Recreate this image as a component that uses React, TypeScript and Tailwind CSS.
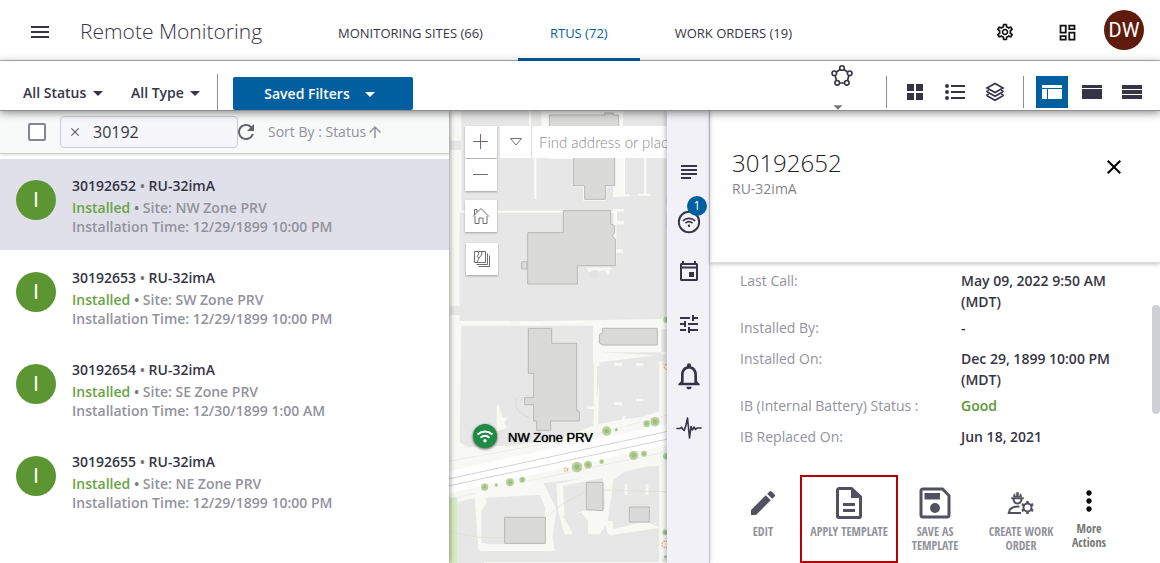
import { useState } from 'react';
import type { ReactNode } from 'react';
import clsx from 'clsx';
import {
  MdArrowDropDown,
  MdArrowUpward,
  MdClose,
  MdEdit,
  MdMenu,
  MdMoreVert,
  MdNotificationsNone,
  MdOutlineDashboard,
  MdOutlineSettings,
  MdRefresh,
  MdSubject,
  MdTune,
} from 'react-icons/md';

const TABS = ['MONITORING SITES (66)', 'RTUS (72)', 'WORK ORDERS (19)'];

const RTUS = [
  { id: '30192652', site: 'NW Zone PRV', installed: '12/29/1899 10:00 PM' },
  { id: '30192653', site: 'SW Zone PRV', installed: '12/29/1899 10:00 PM' },
  { id: '30192654', site: 'SE Zone PRV', installed: '12/30/1899 1:00 AM' },
  { id: '30192655', site: 'NE Zone PRV', installed: '12/29/1899 10:00 PM' },
];

const DETAILS = [
  { label: 'Last Call:', value: 'May 09, 2022 9:50 AM', zone: '(MDT)' },
  { label: 'Installed By:', value: '-' },
  { label: 'Installed On:', value: 'Dec 29, 1899 10:00 PM', zone: '(MDT)' },
  { label: 'IB (Internal Battery) Status :', value: 'Good', good: true },
  { label: 'IB Replaced On:', value: 'Jun 18, 2021' },
];

/* ---------- icons ---------- */

const PolygonIcon = () => (
  <svg width="24" height="24" viewBox="0 0 24 24" fill="none" stroke="currentColor" strokeWidth="1.6">
    <path d="M10 5.5 6.5 8M14 5.5 17.5 8M5.2 11.5l1.2 5M18.8 11.5l-1.2 5M9.5 19h5" />
    <circle cx="12" cy="4" r="2.3" />
    <circle cx="4.3" cy="9.3" r="2.3" />
    <circle cx="19.7" cy="9.3" r="2.3" />
    <circle cx="7.2" cy="18.8" r="2.3" />
    <circle cx="16.8" cy="18.8" r="2.3" />
  </svg>
);

const GridIcon = () => (
  <svg width="16" height="16" viewBox="0 0 16 16" fill="currentColor">
    <path d="M0 0h7v7H0zM9 0h7v7H9zM0 9h7v7H0zM9 9h7v7H9z" />
  </svg>
);

const ListIcon = () => (
  <svg width="20" height="16" viewBox="0 0 20 16" fill="currentColor">
    <circle cx="2" cy="2" r="2" />
    <circle cx="2" cy="8" r="2" />
    <circle cx="2" cy="14" r="2" />
    <path d="M6 1h14v2H6zM6 7h14v2H6zM6 13h14v2H6z" />
  </svg>
);

const LayersIcon = () => (
  <svg width="20" height="20" viewBox="0 0 20 20" fill="none" stroke="currentColor" strokeWidth="1.7">
    <path d="M10 1.5 18 6l-8 4.5L2 6z" />
    <path d="m2 9.8 8 4.5 8-4.5" />
    <path d="m2 13.7 8 4.5 8-4.5" />
    <path d="m1 9.5 3-1.5M19 9.5 16 8M1 13.4l3-1.5M19 13.4l-3-1.5" strokeWidth="1.2" />
  </svg>
);

const SplitViewIcon = () => (
  <svg width="20" height="14" viewBox="0 0 20 14" fill="currentColor">
    <path d="M0 0h20v3H0zM0 4h5v10H0zM6 4h14v10H6z" />
  </svg>
);

const PanelViewIcon = () => (
  <svg width="20" height="14" viewBox="0 0 20 14" fill="currentColor">
    <path d="M0 0h20v3H0zM0 4h20v10H0z" />
  </svg>
);

const RowsViewIcon = () => (
  <svg width="20" height="14" viewBox="0 0 20 14" fill="currentColor">
    <path d="M0 0h20v4H0zM0 5h20v4H0zM0 10h20v4H0z" />
  </svg>
);

const WifiCircleIcon = () => (
  <svg width="24" height="24" viewBox="0 0 24 24" fill="none" stroke="currentColor">
    <circle cx="12" cy="12" r="10.2" strokeWidth="1.9" />
    <path d="M5.8 10.8c3.6-3.2 8.8-3.2 12.4 0M8.4 13.2c2.2-1.9 5-1.9 7.2 0" strokeWidth="1.6" />
    <circle cx="12" cy="15.7" r="1.2" fill="currentColor" stroke="none" />
  </svg>
);

const EventIcon = () => (
  <svg width="22" height="22" viewBox="0 0 22 22" fill="currentColor">
    <path d="M4 0h2v2h10V0h2v2h.5C19.4 2 20 2.7 20 3.5v15c0 .9-.7 1.5-1.5 1.5h-15C2.6 20 2 19.4 2 18.5v-15C2 2.6 2.6 2 3.5 2H4zM4 4v1.5h14V4zM4 7.5V18h14V7.5zM11 11h5v5h-5z" />
  </svg>
);

const PulseIcon = () => (
  <svg width="26" height="22" viewBox="0 0 26 22" fill="none" stroke="currentColor" strokeWidth="1.6" strokeLinejoin="round" strokeLinecap="round">
    <path d="M1 11.5h3l1.5-1.2L7 12.5l1.2 1L10 8l1.5-7 2 20L15 9.5l1.5 3.5 1.5-3 1.5 2.5 1.5-1.5H25" />
  </svg>
);

const TemplateIcon = () => (
  <svg width="26" height="32" viewBox="0 0 26 32">
    <path d="M3 1.5h12.5l9 8.500V29a1.5 1.5 0 0 1-1.5 1.5H3A1.5 1.5 0 0 1 1.5 29V3A1.5 1.5 0 0 1 3 1.5z" fill="none" stroke="currentColor" strokeWidth="3" />
    <path d="M15 1.5V11h9zM7 16h12v3H7zM7 22h12v3H7z" fill="currentColor" />
  </svg>
);

const SaveIcon = () => (
  <svg width="32" height="32" viewBox="0 0 32 32">
    <path d="M4 2h19.5L30 8.5V28a2 2 0 0 1-2 2H4a2 2 0 0 1-2-2V4a2 2 0 0 1 2-2z" fill="none" stroke="currentColor" strokeWidth="3" />
    <path d="M5.5 6H21v6.5H5.5z" fill="currentColor" />
    <circle cx="16" cy="21" r="5" fill="currentColor" />
  </svg>
);

const WorkerIcon = () => (
  <svg width="28" height="24" viewBox="0 0 28 24" fill="none" stroke="currentColor" strokeWidth="2">
    <path d="M6.5 7c0 4 1.5 5.5 4 5.5s4-1.5 4-5.500" />
    <path d="M4.500 6.500h12V8h-12zM6.500 6V4l1.500-1.500V5h1.500V1.500h2V5H13V2.500L14.500 4v2z" fill="currentColor" strokeWidth="0.5" />
    <path d="M12.500 15.500c-4.500 0-8 1-9.700 3.200L1.800 22H14" />
    <circle cx="20.5" cy="16.5" r="4" />
    <path d="M20.5 10v3M20.5 20v3M14.900 13.200l2.500 1.400M23.600 18.400l2.500 1.400M14.900 19.800l2.500-1.400M23.600 14.600l2.500-1.400" strokeWidth="2.5" />
  </svg>
);

const HomeIcon = () => (
  <svg width="18" height="18" viewBox="0 0 18 18" fill="none" stroke="currentColor">
    <path d="m1 9.5 8-8 8 8M2.5 8V2.5H5V5M3 9v7.5h4V11h4v5.5h4V9" />
  </svg>
);

const BasemapIcon = () => (
  <svg width="18" height="18" viewBox="0 0 18 18" fill="none" stroke="currentColor">
    <path d="M1.5 1.5h11v11h-11zM3.5 14.5h11v-11M5.5 16.5h11v-11M5 1.5 6 4 4 6.5 6 8 4 12.5M9 1.5 8.5 5 6 8" />
  </svg>
);

/* ---------- header ---------- */

const Header = () => {
  const [tab, setTab] = useState(1);

  return (
    <header className="flex h-[61px] shrink-0 border-b border-[#b5b5b9]">
      <div className="flex w-[306px] shrink-0 items-center gap-7 pl-7">
        <button aria-label="Menu" className="pt-1">
          <MdMenu size={24} />
        </button>
        <h1 className="pt-1 text-[21px] font-light whitespace-nowrap">Remote Monitoring</h1>
      </div>
      <nav className="flex gap-[3px]">
        {TABS.map((name, i) => (
          <button
            key={name}
            onClick={() => setTab(i)}
            className={clsx(
              '-mb-px border-b-3 px-8 pt-[10px] text-[13px] font-medium whitespace-nowrap',
              i === tab ? 'border-[#005f9e] text-[#005f9e]' : 'border-transparent',
            )}
          >
            {name}
          </button>
        ))}
      </nav>
      <div className="ml-auto flex items-center pr-4 text-[#111]">
        <button aria-label="Settings" className="mr-[42px] pt-1">
          <MdOutlineSettings size={20} />
        </button>
        <button aria-label="Dashboard" className="mr-[26px] pt-1">
          <MdOutlineDashboard size={21} />
        </button>
        <button className="size-10 rounded-full bg-[#5f1b0b] font-[Roboto] text-xl text-white">DW</button>
      </div>
    </header>
  );
};

const FilterSelect = ({ name }: { name: string }) => (
  <label className="relative flex items-center">
    <select aria-label={name} className="appearance-none bg-transparent pr-4 text-sm font-semibold">
      <option>{name}</option>
    </select>
    <MdArrowDropDown size={24} className="pointer-events-none absolute -right-[7px]" />
  </label>
);

const ToolButton = ({ label, active, children }: { label: string; active?: boolean; children: ReactNode }) => (
  <button
    aria-label={label}
    className={clsx('flex size-8 items-center justify-center', active && 'bg-[#005f9e] text-white')}
  >
    {children}
  </button>
);

const Toolbar = () => (
  <div className="relative z-20 flex h-[50px] shrink-0 items-end border-b border-[#8d8d90] bg-white shadow-[0_2px_8px_rgba(0,0,0,0.45)]">
    <div className="flex h-9 items-center gap-7 border-r border-[#8d8d99] pt-[2px] pr-[17px] pl-[23px]">
      <FilterSelect name="All Status" />
      <FilterSelect name="All Type" />
    </div>
    <button className="ml-[15px] flex h-[33px] w-[180px] items-center justify-center gap-2 rounded-xs bg-[#005f9e] text-sm font-semibold text-white">
      Saved Filters
      <MdArrowDropDown size={24} />
    </button>
    <div className="ml-auto flex items-center self-stretch pr-3">
      <button aria-label="Draw area" className="mr-7 flex h-full w-8 flex-col items-center justify-between overflow-hidden pt-[3px]">
        <PolygonIcon />
        <MdArrowDropDown size={22} className="mr-2 -mb-2 shrink-0 text-[#777]" />
      </button>
      <div className="flex items-center gap-2 pt-3">
        <span className="mr-1 h-8 w-px bg-[#8d8d99]" />
        <ToolButton label="Cards"><GridIcon /></ToolButton>
        <ToolButton label="List"><ListIcon /></ToolButton>
        <ToolButton label="Layers"><LayersIcon /></ToolButton>
        <span className="mx-1 h-8 w-px bg-[#8d8d99]" />
        <ToolButton label="Split view" active><SplitViewIcon /></ToolButton>
        <ToolButton label="Panel view"><PanelViewIcon /></ToolButton>
        <ToolButton label="Rows view"><RowsViewIcon /></ToolButton>
      </div>
    </div>
  </div>
);

/* ---------- list ---------- */

const RtuList = () => {
  const [query, setQuery] = useState('30192');
  const [selected, setSelected] = useState('30192652');

  return (
    <section className="z-10 flex w-[449px] shrink-0 flex-col bg-white shadow-[1px_0_5px_rgba(0,0,0,0.4)]">
      <div className="flex h-[43px] shrink-0 items-center border-b border-[#cfd2d2] bg-[#f8faf9] pl-7 shadow-sm">
        <input
          type="checkbox"
          aria-label="Select all"
          className="size-[18px] appearance-none rounded-xs border-2 border-[#85858f] bg-white checked:bg-[#005f9e]"
        />
        <div className="ml-[14px] flex h-8 w-[178px] items-center rounded-sm border border-[#ccccd4] bg-[#f7f7fb]">
          <button aria-label="Clear" onClick={() => setQuery('')} className="px-[7px] text-[#5c5c68]">
            <MdClose size={14} />
          </button>
          <input
            aria-label="Search"
            value={query}
            onChange={e => setQuery(e.target.value)}
            className="min-w-0 flex-1 bg-transparent pl-1 text-base outline-none"
          />
        </div>
        <button aria-label="Refresh" className="-ml-1 text-[#62626c]">
          <MdRefresh size={24} />
        </button>
        <button className="ml-[10px] flex items-center text-sm text-[#92929c]">
          Sort By : Status
          <MdArrowUpward size={18} />
        </button>
      </div>
      <ul className="pt-[5px]">
        {RTUS.map(rtu => (
          <li key={rtu.id}>
            <button
              onClick={() => setSelected(rtu.id)}
              className={clsx(
                'mb-px flex h-[91px] w-full gap-4 px-4 pt-[17px] text-left text-sm font-semibold text-[#92929c]',
                selected === rtu.id && 'bg-[#e0e0ea]',
              )}
            >
              <span className="mt-1 flex size-10 shrink-0 items-center justify-center rounded-full bg-[#5c9632] font-[Roboto] text-xl font-normal text-white">
                I
              </span>
              <span className="leading-[19px]">
                <span className="mb-[3px] block text-[#363545]">
                  {rtu.id} <span className="text-[#77777c]">•</span> RU-32imA
                </span>
                <span className="block">
                  <span className="text-[#6aa343]">Installed</span> <span className="text-[#77777c]">•</span> Site: {rtu.site}
                </span>
                <span className="block">Installation Time: {rtu.installed}</span>
              </span>
            </button>
          </li>
        ))}
      </ul>
    </section>
  );
};

/* ---------- map ---------- */

const TREES = [
  [110, 498, 11], [145, 492, 5], [186, 484, 12], [223, 476, 9], [387, 438, 16], [420, 431, 12], [461, 422, 7],
  [476, 330, 14], [505, 326, 5], [557, 403, 14], [588, 398, 9], [596, 308, 10], [621, 302, 14], [655, 406, 10],
  [652, 634, 9], [652, 708, 5], [656, -4, 10],
];

const MapDrawing = () => (
  <svg className="absolute inset-0 size-full" viewBox="3 6 654 1359" preserveAspectRatio="xMidYMin slice">
    <rect x="-600" y="0" width="1900" height="1400" fill="#f8f9f4" />
    {/* paved blocks */}
    <g fill="#e7e7e7">
      <path d="M40 6H280V55H300V150H380V235H405V275H475V235H495V265L655 255V620L640 630L35 640V310L40 300V6z" />
      <path d="M520 6H655V260H520z" />
      <path d="M6 95h34v28H6zM6 590h30v28H6zM640 255h20v30h-20zM640 315h20v40h-20z" />
      <path d="M40 650H435V740Q430 775 460 772L435 950L360 980L200 1010L60 1015L35 1000z" />
      <path d="M455 760L655 735V770H640V905L580 925L530 930L450 945z" />
      <path d="M460 730H655V660H640V740z" />
      <path d="M28 1180L85 1160L100 1310H310L325 1200L285 1120L370 1100L480 1085L495 1270L640 1240V1360H28z" />
      <path d="M495 1115L545 1075L640 1070V1240L480 1275z" />
      <path d="M6 1350H660V1365H6z" />
    </g>
    <path d="M35 308H500M35 640H186M218 641H276M308 640H398M262 130V270M246 6V60M592 140V255M528 140V255M515 258H545M570 257H608" stroke="#fbfcf8" strokeWidth="6" fill="none" />
    <path d="M500 6h25v254h-28zM497 300h30v8h-20v28h20v10h-22v75h20v10h-20v38h-10z" fill="#f9faf5" />
    <path d="M415 475h75l-10 25-8-15-50 5z" fill="#f6f7f2" />
    <ellipse cx="440" cy="496" rx="16" ry="12" fill="#e3e3e1" />
    <path d="M423 636H645V648H452V720L438 730V660z" fill="#f8f9f4" />

    <g transform="translate(0 636)">
      {/* avenue */}
      <path d="M0 445L200 390L400 350L660 285V420L500 460L260 490L0 550z" fill="#f7f8f3" />
      <path d="M0 470L660 328M0 498L660 352" stroke="#fff" strokeWidth="38" />
      <path d="M0 421L200 385L440 340L660 282M0 536L250 478L500 425L660 392" stroke="#e6e7e2" strokeWidth="2" fill="none" />
      <path d="M0 474L660 331M0 495L660 354" stroke="#bdbdb9" strokeWidth="2" />
      {/* lawns and driveways */}
      <path d="M80 525Q80 512 100 508L250 478Q285 475 295 510L320 690H95Q88 685 90 668z" fill="#f8f9f4" />
      <path d="M115 550V530L275 522L292 560V670H118L100 665V570z" fill="#e7e7e7" />
      <path d="M325 490L470 455Q500 455 490 500L480 600L600 605L640 620L490 642Q472 640 475 610L455 640H420V600L400 575L345 585L375 640H350L330 570z" fill="#f8f9f4" />
      <path d="M345 495L465 470L472 565L405 570L350 590z" fill="#e7e7e7" />
      <path d="M495 480L535 450L635 435V590L495 625z" fill="#e7e7e7" />
      <path d="M638 120V285M442 10V310M660 5H440M638 430V730" stroke="#f8f9f4" strokeWidth="9" />
      <path d="M108 727H660M150 683H310M150 253V330M498 130H522M564 130H586M498 248H522M564 237H586M534 490V522M597 490V522M418 260H440M528 285V325" stroke="#f8f9f4" strokeWidth="8" />
      <path d="M0 530h28V730H0z" fill="#d9ebc2" />
      <path d="M0 633L90 649H170M292 590L350 545L410 514M465 507L655 512" stroke="#dedecf" strokeWidth="2" fill="none" />
      <path d="M205 230q-8 30 12 45l30 18M240 222q-25 5-20 25" stroke="#dbdbd8" strokeWidth="3" fill="none" />
      <path d="M150 250l15 40 15 0-12 15 10 15-28 10z" fill="#f8f9f4" />
    </g>

    {/* buildings */}
    <g fill="#dadad9" stroke="#b8b8b7" strokeWidth="3">
      <path d="M304 18H470V12H496V18H512V80H304zM377 80V230H410V271H472V230H500V80z" />
      <path d="M346 305H488V345L500 350V372L492 380L502 390V470H388V525H239V371H346zM221 458H237V480H221z" />
      <g transform="translate(0 636)">
        <path d="M241 22H311V67H386V268L394 272V300H308V328H266V300H257V251H230V230H257V157H241z" />
        <path d="M464 22H628V72H464L454 66V40L464 36z" />
        <path d="M170 589H292V667H170zM415 484H465V569L415 566zM544 558H604V603H544z" />
      </g>
    </g>

    <g transform="translate(0 636)">
      {TREES.map(([x, y, r]) => (
        <g key={`${x}-${y}`}>
          <circle cx={x} cy={y} r={r} fill="#b9d09c" />
          <circle cx={x} cy={y} r={r / 2} fill="#9bbd80" />
        </g>
      ))}
      <g fill="none" stroke="#e8ae84" strokeWidth="4" strokeDasharray="5 3">
        <circle cx="354" cy="446" r="5" />
        <circle cx="652" cy="670" r="10" />
        <circle cx="656" cy="138" r="7" />
      </g>
    </g>
  </svg>
);

const MAP_BUTTON = 'flex size-8 items-center justify-center bg-white text-[#6e6e6e] shadow-[0_1px_2px_rgba(0,0,0,0.3)]';

const MapView = () => (
  <section className="relative min-w-0 flex-1 overflow-hidden bg-[#f8f9f4]">
    <MapDrawing />
    <div className="absolute top-[15px] left-4 flex flex-col">
      <button aria-label="Zoom in" className={MAP_BUTTON}>
        <svg width="16" height="16" viewBox="0 0 16 16" stroke="#8a5a8f">
          <path d="M7.5 0v15" />
          <path d="M0 7.5h15" stroke="#6e6e6e" />
        </svg>
      </button>
      <button aria-label="Zoom out" className={clsx(MAP_BUTTON, 'mt-px')}>
        <svg width="16" height="16" viewBox="0 0 16 16" stroke="#6e6e6e">
          <path d="M0 7.5h15" />
        </svg>
      </button>
      <button aria-label="Home" className={clsx(MAP_BUTTON, 'mt-[9px]')}><HomeIcon /></button>
      <button aria-label="Basemaps" className={clsx(MAP_BUTTON, 'mt-[11px] ml-px')}><BasemapIcon /></button>
    </div>
    <div className="absolute top-[15px] right-0 left-[51px] flex h-8 bg-white">
      <button aria-label="Search source" className="flex w-8 shrink-0 items-center justify-center border-r border-[#ddd]">
        <svg width="14" height="10" viewBox="0 0 14 10" fill="none" stroke="#6e6e6e">
          <path d="M1.5 1.5h11L7 8z" />
        </svg>
      </button>
      <input
        aria-label="Find address or place"
        placeholder="Find address or place"
        className="min-w-0 flex-1 pl-[7px] font-[Lato] text-[15px] font-light outline-none placeholder:text-[#8a8a8a]"
      />
    </div>
    <div className="absolute top-[313px] left-6 flex items-center gap-[11px]">
      <span className="flex size-6 items-center justify-center rounded-full bg-[#1f8a43] shadow-[0_1px_3px_rgba(0,0,0,0.7)]">
        <svg width="18" height="14" viewBox="0 0 18 14" fill="none" stroke="#fff" strokeWidth="2">
          <path d="M1.5 5.5c4.5-4 10.5-4 15 0M4.5 8.8c2.7-2.4 6.3-2.4 9 0" />
          <circle cx="9" cy="11.7" r="1.7" fill="#fff" stroke="none" />
        </svg>
      </span>
      <span className="pt-1 font-['Liberation_Sans'] text-[13px] whitespace-nowrap text-black [text-shadow:0_0_1px_#000]">
        NW Zone PRV
      </span>
    </div>
  </section>
);

/* ---------- detail ---------- */

const Rail = () => (
  <nav className="z-10 flex w-[43px] shrink-0 flex-col items-center border-r border-[#c6c6cc] bg-[#f2f1f8] pt-[49px] pl-[2px] shadow-[-1px_0_5px_rgba(0,0,0,0.3)]">
    <button aria-label="Summary"><MdSubject size={24} /></button>
    <button aria-label="Signal" className="relative mt-[26px]">
      <WifiCircleIcon />
      <span className="absolute -top-[14px] left-[10px] flex size-5 items-center justify-center rounded-full bg-[#005f9e] text-xs text-white">
        1
      </span>
    </button>
    <button aria-label="Schedule" className="mt-[27px]"><EventIcon /></button>
    <button aria-label="Tune" className="mt-[29px]"><MdTune size={24} /></button>
    <button aria-label="Alarms" className="mt-6"><MdNotificationsNone size={32} /></button>
    <button aria-label="Readings" className="mt-[25px]"><PulseIcon /></button>
  </nav>
);

const Action = ({ label, icon, className }: { label: string; icon: ReactNode; className: string }) => (
  <button
    className={clsx(
      "flex h-[88px] flex-col items-center border-2 px-[2px] font-['Open_Sans_Condensed','Liberation_Sans_Narrow','Open_Sans'] text-xs leading-[14px] font-bold",
      className,
    )}
  >
    <span className="flex h-12 items-center pt-1 text-[#51515f]">{icon}</span>
    <span className="text-[#92929c]">{label}</span>
  </button>
);

const DetailPanel = () => (
  <section className="flex w-[450px] shrink-0 flex-col bg-white">
    <div className="z-10 flex h-[152px] shrink-0 items-start justify-between border-b border-[#ddd] pt-9 pr-[34px] pl-[22px] shadow-[0_1px_4px_rgba(0,0,0,0.25)]">
      <div>
        <h2 className="text-2xl font-light text-[#222]">30192652</h2>
        <p className="text-sm text-[#85858a]">RU-32imA</p>
      </div>
      <button aria-label="Close" className="pt-2 text-black"><MdClose size={24} /></button>
    </div>
    <div className="flex min-h-0 flex-1">
      <dl className="min-w-0 flex-1 overflow-hidden pt-[7px] pl-[30px] text-sm leading-[21px]">
        {DETAILS.map(({ label, value, zone, good }) => (
          <div key={label} className="flex min-h-[31px] pb-[5px]">
            <dt className="w-[221px] shrink-0 text-[#92929c]">{label}</dt>
            <dd className={clsx('font-semibold', good && 'text-[#5c9632]')}>
              {value}
              {zone && <span className="block">{zone}</span>}
            </dd>
          </div>
        ))}
      </dl>
      <div className="w-2 pt-[42px]">
        <div className="h-[109px] rounded-full bg-[#cfcfd6]" />
      </div>
    </div>
    <div className="flex shrink-0 pl-4">
      <Action label="EDIT" icon={<MdEdit size={32} />} className="w-[74px] border-transparent" />
      <Action label="APPLY TEMPLATE" icon={<TemplateIcon />} className="w-[98px] border-[#b80000]" />
      <Action label="SAVE AS TEMPLATE" icon={<SaveIcon />} className="w-[74px] border-transparent" />
      <Action label="CREATE WORK ORDER" icon={<WorkerIcon />} className="w-[98px] border-transparent" />
      <button className="flex w-[38px] flex-col items-center font-['Open_Sans_Condensed','Liberation_Sans_Narrow','Open_Sans'] text-xs leading-[14px] text-[#777]">
        <span className="flex h-[47px] items-center pt-1 text-black"><MdMoreVert size={32} /></span>
        More Actions
      </button>
    </div>
  </section>
);

export default function App() {
  return (
    <div className="flex h-screen flex-col overflow-hidden bg-white font-['Open_Sans','Noto_Sans',sans-serif] text-[#363545]">
      <Header />
      <Toolbar />
      <main className="flex min-h-0 flex-1">
        <RtuList />
        <MapView />
        <Rail />
        <DetailPanel />
      </main>
    </div>
  );
}
